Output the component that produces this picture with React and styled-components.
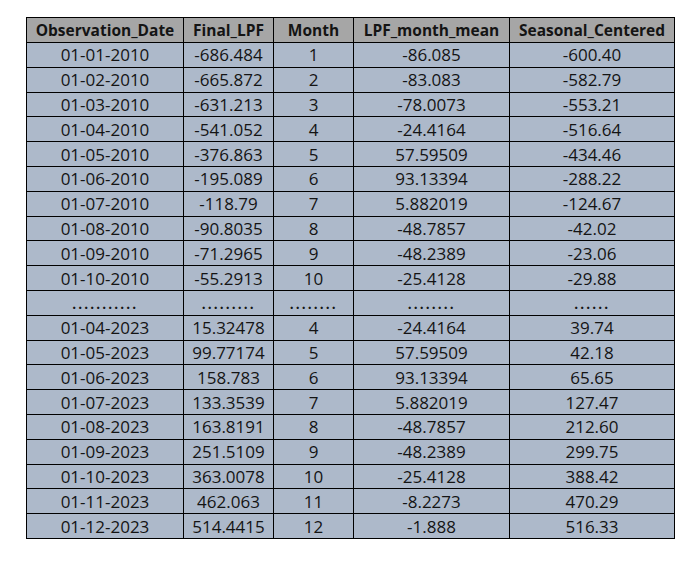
import React from "react";
import styled, { createGlobalStyle } from "styled-components";

const GlobalStyle = createGlobalStyle`
  body {
    margin: 0;
    background: #ffffff;
  }
`;

const Page = styled.div`
  padding: 17px 0 0 26px;
  font-family: "Open Sans", "Noto Sans", sans-serif;
  color: #141414;
`;

const Table = styled.table`
  border-collapse: collapse;
  table-layout: fixed;
  width: 648px;
  border: 1.5px solid #000;
`;

const HeadCell = styled.th`
  background: #a6a6a6;
  font-weight: 700;
  font-size: 15.5px;
  height: 24px;
  padding: 0;
  text-align: center;
  border: 1px solid #000;
  white-space: nowrap;
`;

const Cell = styled.td`
  background: #adb9ca;
  font-size: 17px;
  height: 23.8px;
  padding: 0;
  text-align: center;
  border: 1px solid #000;
  white-space: nowrap;
`;

const Dots = styled.span`
  letter-spacing: 1.6px;
  font-size: 16px;
  font-weight: 600;
`;

const columns = [
  { name: "Observation_Date", width: 157 },
  { name: "Final_LPF", width: 90 },
  { name: "Month", width: 80 },
  { name: "LPF_month_mean", width: 156 },
  { name: "Seasonal_Centered", width: 165 },
];

const rows = [
  ["01-01-2010", "-686.484", "1", "-86.085", "-600.40"],
  ["01-02-2010", "-665.872", "2", "-83.083", "-582.79"],
  ["01-03-2010", "-631.213", "3", "-78.0073", "-553.21"],
  ["01-04-2010", "-541.052", "4", "-24.4164", "-516.64"],
  ["01-05-2010", "-376.863", "5", "57.59509", "-434.46"],
  ["01-06-2010", "-195.089", "6", "93.13394", "-288.22"],
  ["01-07-2010", "-118.79", "7", "5.882019", "-124.67"],
  ["01-08-2010", "-90.8035", "8", "-48.7857", "-42.02"],
  ["01-09-2010", "-71.2965", "9", "-48.2389", "-23.06"],
  ["01-10-2010", "-55.2913", "10", "-25.4128", "-29.88"],
  "dots",
  ["01-04-2023", "15.32478", "4", "-24.4164", "39.74"],
  ["01-05-2023", "99.77174", "5", "57.59509", "42.18"],
  ["01-06-2023", "158.783", "6", "93.13394", "65.65"],
  ["01-07-2023", "133.3539", "7", "5.882019", "127.47"],
  ["01-08-2023", "163.8191", "8", "-48.7857", "212.60"],
  ["01-09-2023", "251.5109", "9", "-48.2389", "299.75"],
  ["01-10-2023", "363.0078", "10", "-25.4128", "388.42"],
  ["01-11-2023", "462.063", "11", "-8.2273", "470.29"],
  ["01-12-2023", "514.4415", "12", "-1.888", "516.33"],
];

const dotCounts = [11, 9, 8, 8, 6];

const App = () => {
  return (
    <Page>
      <GlobalStyle />
      <Table>
        <colgroup>
          {columns.map((c) => (
            <col key={c.name} style={{ width: c.width }} />
          ))}
        </colgroup>
        <thead>
          <tr>
            {columns.map((c) => (
              <HeadCell key={c.name}>{c.name}</HeadCell>
            ))}
          </tr>
        </thead>
        <tbody>
          {rows.map((row, i) =>
            row === "dots" ? (
              <tr key={i}>
                {dotCounts.map((n, j) => (
                  <Cell key={j}>
                    <Dots>{".".repeat(n)}</Dots>
                  </Cell>
                ))}
              </tr>
            ) : (
              <tr key={i}>
                {row.map((v, j) => (
                  <Cell key={j}>{v}</Cell>
                ))}
              </tr>
            )
          )}
        </tbody>
      </Table>
    </Page>
  );
};

export default App;
